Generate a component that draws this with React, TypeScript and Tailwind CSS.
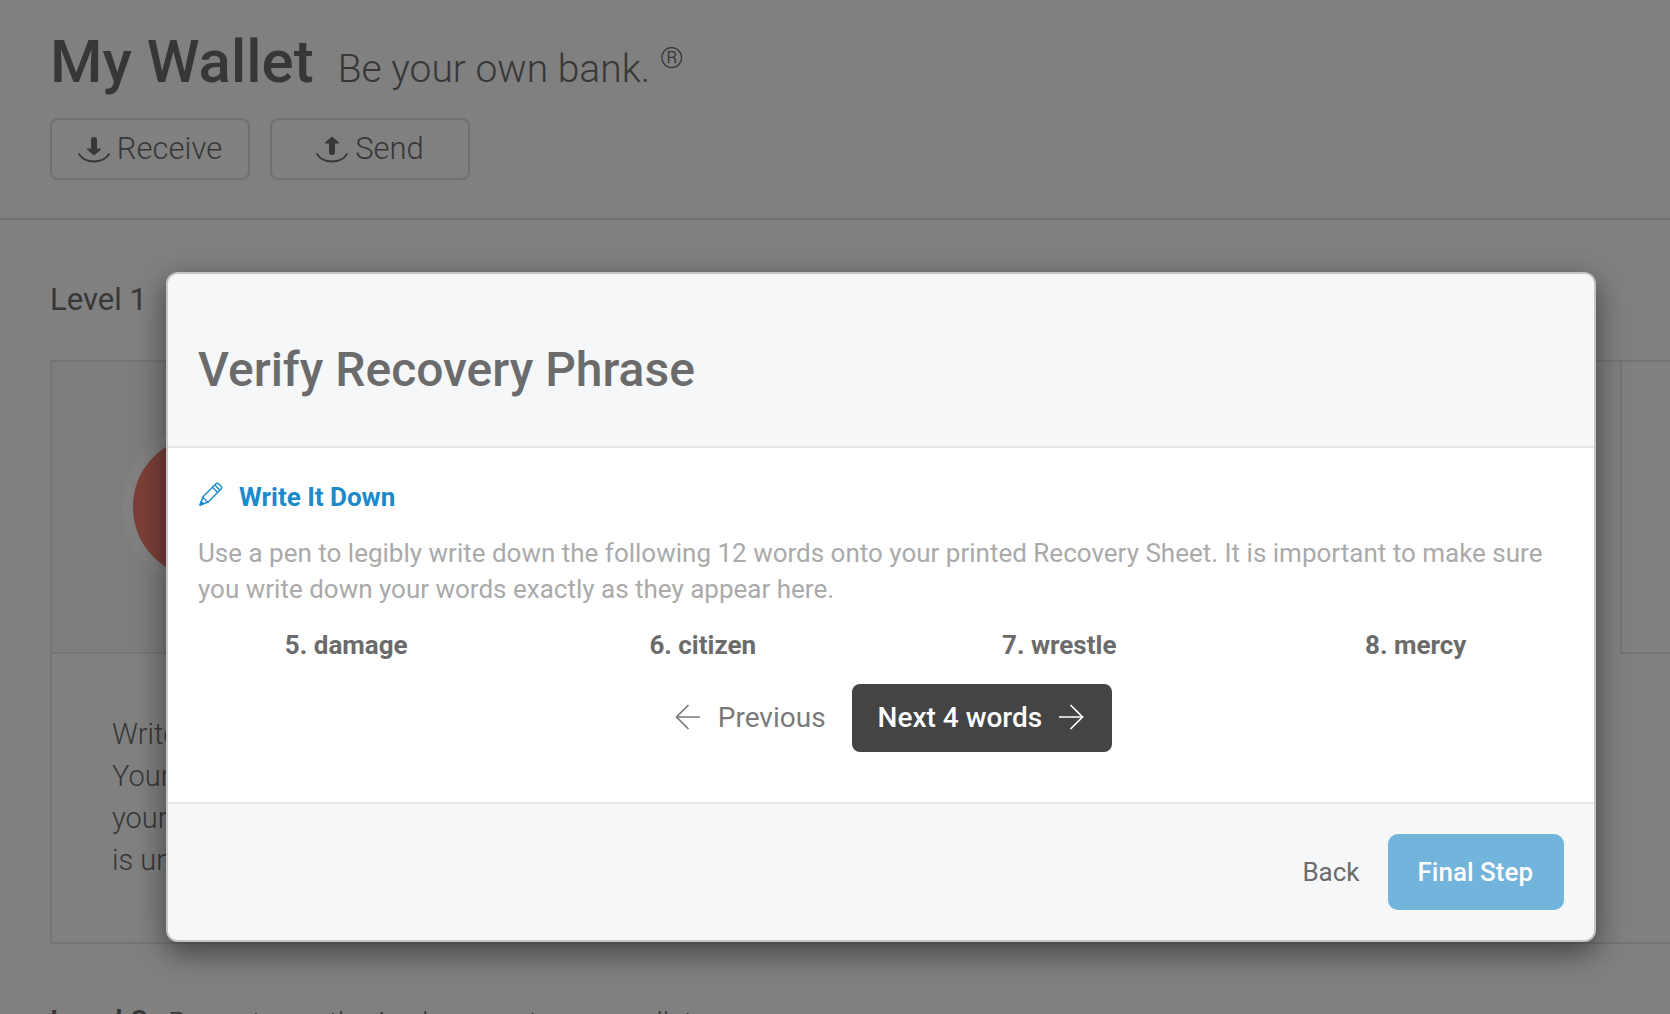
import React from "react";

const words = ["5. damage", "6. citizen", "7. wrestle", "8. mercy"];

function Arrow({ left = false }: { left?: boolean }) {
  return (
    <svg width="26" height="28" viewBox="0 0 26 28" fill="none" stroke="currentColor" strokeWidth="1.7" aria-hidden="true">
      {left ? (
        <path d="M25 13H1.500M13.500 1 1.500 13l12 12" />
      ) : (
        <path d="M1 13h23.500M12.500 1l12 12-12 12" />
      )}
    </svg>
  );
}

function TransferIcon({ up = false }: { up?: boolean }) {
  return (
    <svg width="32" height="28" viewBox="0 0 32 28" aria-hidden="true">
      <path
        fill="currentColor"
        d={
          up
            ? "M16 1.500l6.500 5.500c.8.800.4 1.500-.5 1.500h-3V17.500q0 2.500-3 2.500t-3-2.500V8.500h-3c-.9 0-1.300-.7-.5-1.500z"
            : "M16 20.500l6.500-5.500c.8-.8.4-1.500-.5-1.500h-3V4.500q0-2.500-3-2.500t-3 2.500v9h-3c-.9 0-1.300.7-.5 1.500z"
        }
      />
      <path d="M1 19C7 29 25 29 31 19" fill="none" stroke="currentColor" strokeWidth="1.800" strokeLinecap="round" />
    </svg>
  );
}

function Pencil() {
  return (
    <svg
      className="mb-1.5 ml-px"
      width="24"
      height="24"
      viewBox="0 0 24 24"
      fill="none"
      stroke="currentColor"
      strokeWidth="1.400"
      strokeLinejoin="round"
      aria-hidden="true"
    >
      <path d="M1 23l3-8.200L16.700 2.100q1.500-1.500 3-.2l2.300 2.300q1.300 1.500-.2 3L9.200 20z" />
      <path d="M4 14.800q.5 2 2 2.300.5 2 3.200 2.900M13.500 5.300l5.200 5.200M15.800 3l5.200 5.200" />
      <path d="M1 23l1.200-3.500 2.300 2.300z" fill="currentColor" />
    </svg>
  );
}

export default function App() {
  return (
    <div className="relative h-screen overflow-hidden bg-[#808080] font-['Roboto',sans-serif] text-[#373737]">
      <header className="border-b-2 border-[#6f6f6f] px-[50px] pt-[26px] pb-[38px]">
        <div className="flex items-baseline gap-6">
          <h1 className="text-[60px] leading-[72px] font-medium">My Wallet</h1>
          <p className="text-[39px] leading-[40px] font-light">
            Be your own bank. <sup className="-top-3.5 align-baseline text-[30px] leading-none">®</sup>
          </p>
        </div>
        <div className="mt-5 flex gap-5">
          <button type="button" className="flex h-[62px] w-[200px] items-center justify-center gap-[7px] rounded-lg border-2 border-[#707070] text-[31px] font-light">
            <TransferIcon />
            Receive
          </button>
          <button type="button" className="flex h-[62px] w-[200px] items-center justify-center gap-[7px] rounded-lg border-2 border-[#707070] text-[31px] font-light">
            <TransferIcon up />
            Send
          </button>
        </div>
      </header>

      <main className="pl-[50px]">
        <h2 className="pt-[60px] text-[31px] leading-[40px]">Level 1</h2>
        <section className="mt-10 grid grid-cols-[1570px_1fr] border-y-2 border-l-2 border-[#747474]">
          <article>
            <div className="flex h-[292px] w-[304px] items-center justify-center border-b-2 border-[#747474] bg-[#7b7d7f]">
              <div className="size-[164px] rounded-full border-[11px] border-[#808080] bg-[#7c3f38]" />
            </div>
            <p className="px-[60px] pt-[59px] pb-[61px] text-[29px] leading-[42px] font-light">
              Write it down.
              <br />
              Your words are
              <br />
              your backup. It
              <br />
              is unique.
            </p>
          </article>
          <div className="-ml-[2px] h-[292px] border-b-2 border-l-2 border-[#747474]" />
        </section>
        <div className="flex items-baseline gap-5 pt-[58px] whitespace-nowrap">
          <h2 className="text-[31px] leading-[40px] font-medium">Level 2</h2>
          <p className="text-[28px] leading-[40px] font-light">Prevent unauthorized access to your wallet.</p>
        </div>
      </main>

      <div
        role="dialog"
        aria-modal="true"
        aria-labelledby="dialog-title"
        className="absolute top-[272px] right-[74px] left-[166px] overflow-hidden rounded-xl border-2 border-[#c4c5c6] bg-white text-[26px] text-[#6b6b6b] shadow-[0_10px_30px_rgba(0,0,0,0.5)]"
      >
        <div className="border-b-2 border-[#e5e5e5] bg-[#f5f7f9] px-[30px] pt-[66px] pb-[46px]">
          <h2 id="dialog-title" className="text-[48px] leading-[60px] font-medium">
            Verify Recovery Phrase
          </h2>
        </div>

        <div className="pt-[31px] pb-[50px]">
          <div className="px-[30px]">
            <h3 className="flex items-center gap-4 leading-[36px] font-bold text-[#1b8ac9]">
              <Pencil />
              Write It Down
            </h3>
            <p className="mt-5 leading-[36px] text-[#aaaaaa]">
              Use a pen to legibly write down the following 12 words onto your printed Recovery Sheet. It is important
              to make sure you write down your words exactly as they appear here.
            </p>
          </div>
          <ol className="mt-5 grid grid-cols-4 text-center leading-[36px] font-bold">
            {words.map((word) => (
              <li key={word}>{word}</li>
            ))}
          </ol>
          <div className="mt-[21px] flex items-center justify-center gap-[26px] text-[28px]">
            <button type="button" className="flex items-center gap-[17px] pl-[25px] text-[#7a7a7a]">
              <Arrow left />
              Previous
            </button>
            <button type="button" className="flex h-[68px] items-center gap-4 rounded-lg bg-[#444444] pr-7 pl-[26px] font-medium text-white">
              Next 4 words
              <Arrow />
            </button>
          </div>
        </div>

        <div className="flex items-center justify-end gap-7 border-t-2 border-[#e5e5e5] bg-[#f5f7f9] p-[30px]">
          <button type="button">Back</button>
          <button type="button" className="h-[76px] rounded-[10px] bg-[#72b4db] pr-[31px] pl-[30px] font-medium text-white">
            Final Step
          </button>
        </div>
      </div>
    </div>
  );
}
